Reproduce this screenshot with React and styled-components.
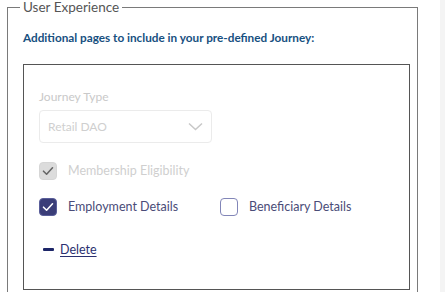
import React from "react";
import styled, { createGlobalStyle } from "styled-components";

const Global = createGlobalStyle`
  html, body { margin: 0; padding: 0; background: #fff; }
  body { font-family: Lato, "Open Sans", sans-serif; overflow: hidden; }
`;

const Page = styled.div`
  display: flex;
  width: 445px;
  height: 292px;
  overflow: hidden;
`;

const Main = styled.div`
  width: 440px;
  flex: none;
  padding: 0 0 0 7px;
  box-sizing: border-box;
`;

const Strip = styled.div`
  flex: 1;
  background: #f4f4f4;
`;

const Fieldset = styled.fieldset`
  margin: 0;
  width: 411px;
  box-sizing: border-box;
  border: 1.5px solid #7a7a7a;
  border-bottom: none;
  padding: 0 7px 20px 15px;
  min-height: 320px;
`;

const Legend = styled.legend`
  margin-left: -3px;
  padding: 0 3px;
  font-size: 13.5px;
  color: #555;
  line-height: 15px;
`;

const Heading = styled.h3`
  margin: 16px 0 0 0;
  font-size: 11.75px;
  font-weight: 700;
  color: #17507f;
  line-height: 14px;
`;

const Panel = styled.div`
  margin-top: 19px;
  border: 1.5px solid #555;
  height: 226px;
  box-sizing: border-box;
  padding: 25px 15px 0 15px;
  display: flex;
  flex-direction: column;
`;

const FieldLabel = styled.div`
  font-size: 12px;
  color: #c9c9c9;
  line-height: 14px;
`;

const Select = styled.div`
  margin-top: 6px;
  width: 173px;
  height: 33px;
  box-sizing: border-box;
  border: 1px solid #ebebeb;
  border-radius: 4px;
  display: flex;
  align-items: center;
  justify-content: space-between;
  padding: 0 8px 0 8px;
  font-size: 12px;
  color: #cfcfcf;
`;

const Grid = styled.div`
  margin-top: 19px;
  display: grid;
  grid-template-columns: 181px auto;
  row-gap: 18px;
`;

const Check = styled.label`
  display: flex;
  align-items: center;
  gap: 11px;
  font-size: 12.5px;
  color: ${(p) => (p.$disabled ? "#cfcfcf" : "#4a4c78")};
  line-height: 18px;
`;

const Box = styled.span`
  width: 18px;
  height: 18px;
  box-sizing: border-box;
  border-radius: 4px;
  display: flex;
  align-items: center;
  justify-content: center;
  flex: none;
  background: ${(p) =>
    p.$state === "disabled" ? "#dcdcdc" : p.$state === "on" ? "#3a3d78" : "#fff"};
  border: 1.5px solid
    ${(p) =>
      p.$state === "disabled" ? "#d6d6d6" : p.$state === "on" ? "#5a5e9a" : "#8286b8"};
`;

const DeleteRow = styled.div`
  margin-top: 26px;
  display: flex;
  align-items: center;
  gap: 6px;
  padding-left: 4px;
`;

const Dash = styled.span`
  width: 11px;
  height: 2.5px;
  background: #1d2668;
  border-radius: 1px;
`;

const DeleteLink = styled.a`
  font-size: 12.5px;
  color: #2a2f70;
  text-decoration: underline;
  text-underline-offset: 2px;
  cursor: pointer;
`;

const Tick = ({ color }) => (
  <svg width="12" height="10" viewBox="0 0 12 10">
    <path d="M1.5 5.2 L4.6 8.2 L10.5 1.8" fill="none" stroke={color} strokeWidth="1.6" strokeLinecap="round" strokeLinejoin="round" />
  </svg>
);

export default function App() {
  return (
    <>
      <Global />
      <Page>
        <Main>
          <Fieldset>
            <Legend>User Experience</Legend>
            <Heading>Additional pages to include in your pre-defined Journey:</Heading>
            <Panel>
              <FieldLabel>Journey Type</FieldLabel>
              <Select>
                <span>Retail DAO</span>
                <svg width="15" height="9" viewBox="0 0 15 9">
                  <path d="M1 1.5 L7.5 7.5 L14 1.5" fill="none" stroke="#c8c8c8" strokeWidth="1.5" />
                </svg>
              </Select>
              <Grid>
                <Check $disabled>
                  <Box $state="disabled">
                    <Tick color="#666" />
                  </Box>
                  Membership Eligibility
                </Check>
                <span />
                <Check>
                  <Box $state="on">
                    <Tick color="#fff" />
                  </Box>
                  Employment Details
                </Check>
                <Check>
                  <Box $state="off" />
                  Beneficiary Details
                </Check>
              </Grid>
              <DeleteRow>
                <Dash />
                <DeleteLink>Delete</DeleteLink>
              </DeleteRow>
            </Panel>
          </Fieldset>
        </Main>
        <Strip />
      </Page>
    </>
  );
}
